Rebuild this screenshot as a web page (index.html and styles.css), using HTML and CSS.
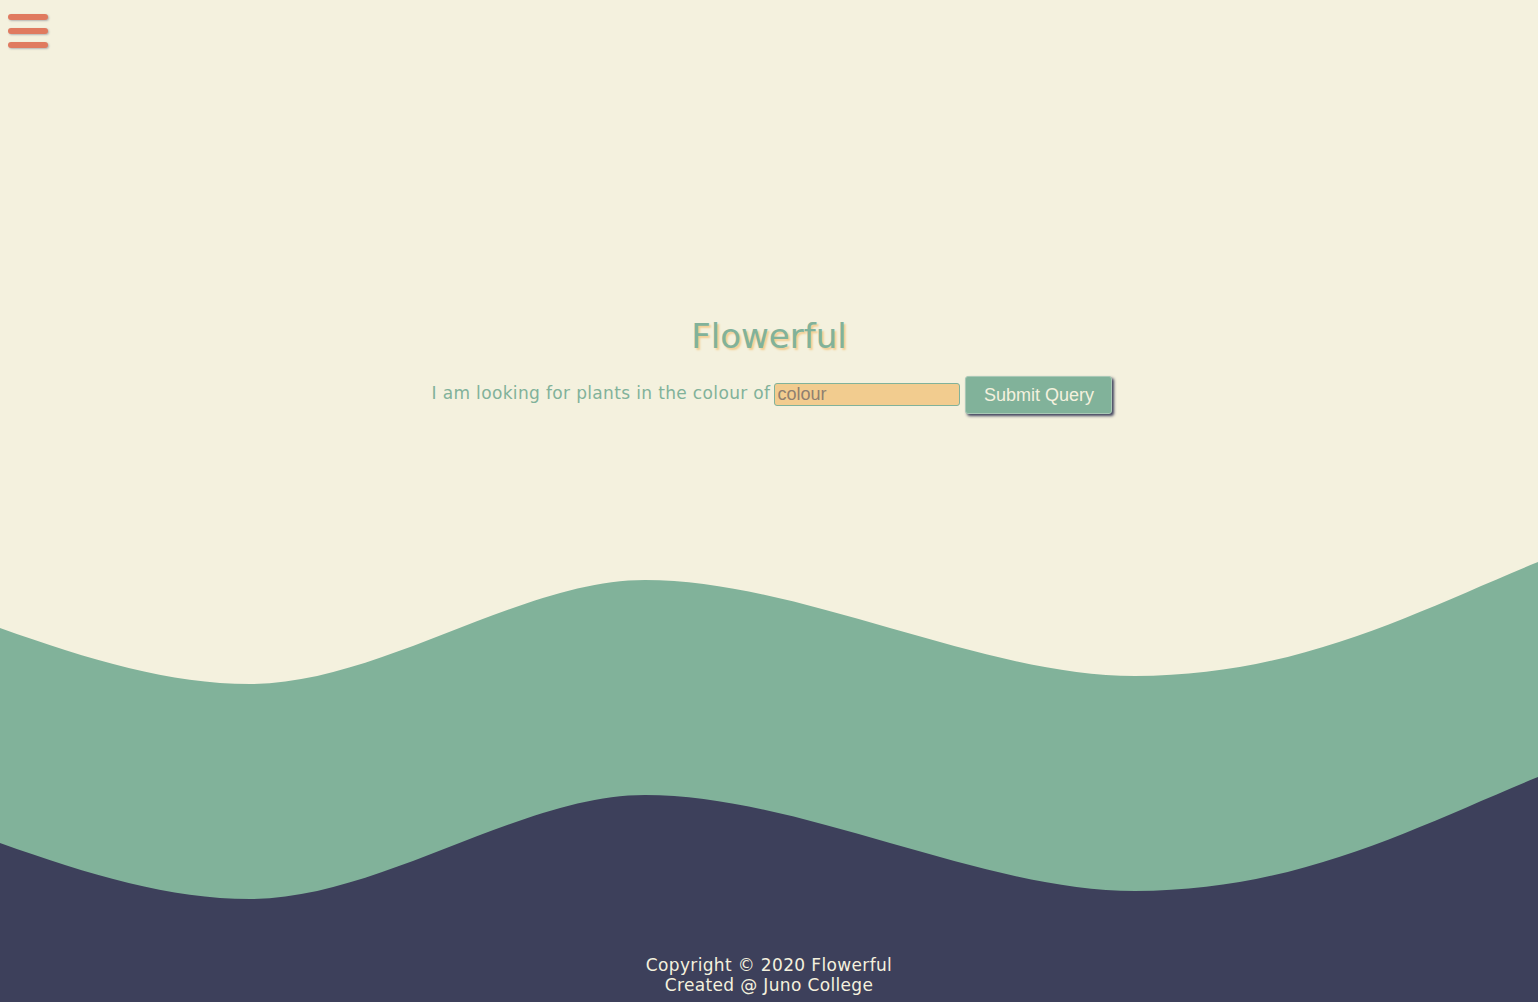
FILE: index.html
```html
<!DOCTYPE html>
<html lang="en">
<head>
<meta charset="utf-8">
<title>Flowerful</title>
<link rel="stylesheet" href="styles.css">
</head>
<body>
<div class="page">
  <header class="top">
    <button class="menu" aria-label="Menu">
      <span class="bar"></span>
      <span class="bar"></span>
      <span class="bar"></span>
    </button>
  </header>
  <main class="hero">
    <h1 class="title">Flowerful</h1>
    <form class="search">
      <label class="search-label" for="colour">I am looking for plants in the colour of</label>
      <input class="search-input" id="colour" type="text" placeholder="colour">
      <button class="search-btn" type="button">Submit Query</button>
    </form>
  </main>
  <div class="waves">
    <svg class="waves-svg" viewBox="0 0 1538 385" preserveAspectRatio="none" aria-hidden="true">
      <path fill="#81b29a" d="M0,68 C90,100 170,124 250,124 C380,124 520,20 645,20 C800,20 980,116 1135,116 C1300,116 1420,50 1538,2 L1538,385 L0,385 Z"/>
      <path fill="#3d405b" d="M0,283 C90,315 170,339 250,339 C380,339 520,235 645,235 C800,235 980,331 1135,331 C1300,331 1420,265 1538,217 L1538,385 L0,385 Z"/>
    </svg>
  </div>
  <footer class="footer">
    <p class="footer-line">Copyright © 2020 Flowerful</p>
    <p class="footer-line">Created @ Juno College</p>
  </footer>
</div>
</body>
</html>
```
FILE: styles.css
```css
* { box-sizing: border-box; }
html, body { margin: 0; padding: 0; }
body {
  background: #f4f1de;
  font-family: "DejaVu Sans", "Open Sans", sans-serif;
  overflow: hidden;
}
.page {
  display: flex;
  flex-direction: column;
  height: 1002px;
}
.top {
  padding: 14px 0 0 8px;
  height: 48px;
}
.menu {
  display: flex;
  flex-direction: column;
  gap: 8px;
  padding: 0;
  margin: 0;
  border: 0;
  background: none;
  cursor: pointer;
}
.bar {
  display: block;
  width: 40px;
  height: 6px;
  border-radius: 3px;
  background: #e07a5f;
  box-shadow: 1px 1px 2px rgba(61, 64, 91, 0.35);
}
.hero {
  height: 512px;
  padding-top: 264px;
  display: flex;
  flex-direction: column;
  align-items: center;
}
.title {
  margin: 0;
  font-size: 34px;
  line-height: 48px;
  font-weight: 400;
  color: #81b29a;
  text-shadow: 2px 2px 2px #f2cc8f;
}
.search {
  margin-top: 16px;
  margin-left: 6px;
  display: flex;
  align-items: center;
  justify-content: center;
}
.search-label {
  font-size: 17px;
  color: #81b29a;
  letter-spacing: 0.35px;
  margin-bottom: 5px;
}
.search-input {
  margin-left: 4px;
  margin-bottom: 2px;
  width: 186px;
  height: 23px;
  padding: 0 2px;
  background: #f2cc8f;
  border: 1px solid #81b29a;
  border-radius: 3px;
  font-family: "Liberation Sans", Arial, sans-serif;
  font-size: 18px;
  color: #3d405b;
}
.search-input::placeholder { color: #8f8070; }
.search-btn {
  margin-left: 5px;
  width: 147px;
  height: 38px;
  background: #81b29a;
  border: 1px solid #a9c9b6;
  border-radius: 3px;
  box-shadow: 2px 2px 3px #3d405b;
  font-family: "Liberation Sans", Arial, sans-serif;
  font-size: 18px;
  color: #f4f1de;
  cursor: pointer;
}
.waves { height: 385px; }
.waves-svg {
  display: block;
  width: 100%;
  height: 385px;
}
.footer {
  flex: 1;
  background: #3d405b;
  padding-top: 10px;
  text-align: center;
  color: #f4f1de;
}
.footer-line {
  margin: 0;
  font-size: 17px;
  line-height: 20px;
  letter-spacing: 0.35px;
}
```
